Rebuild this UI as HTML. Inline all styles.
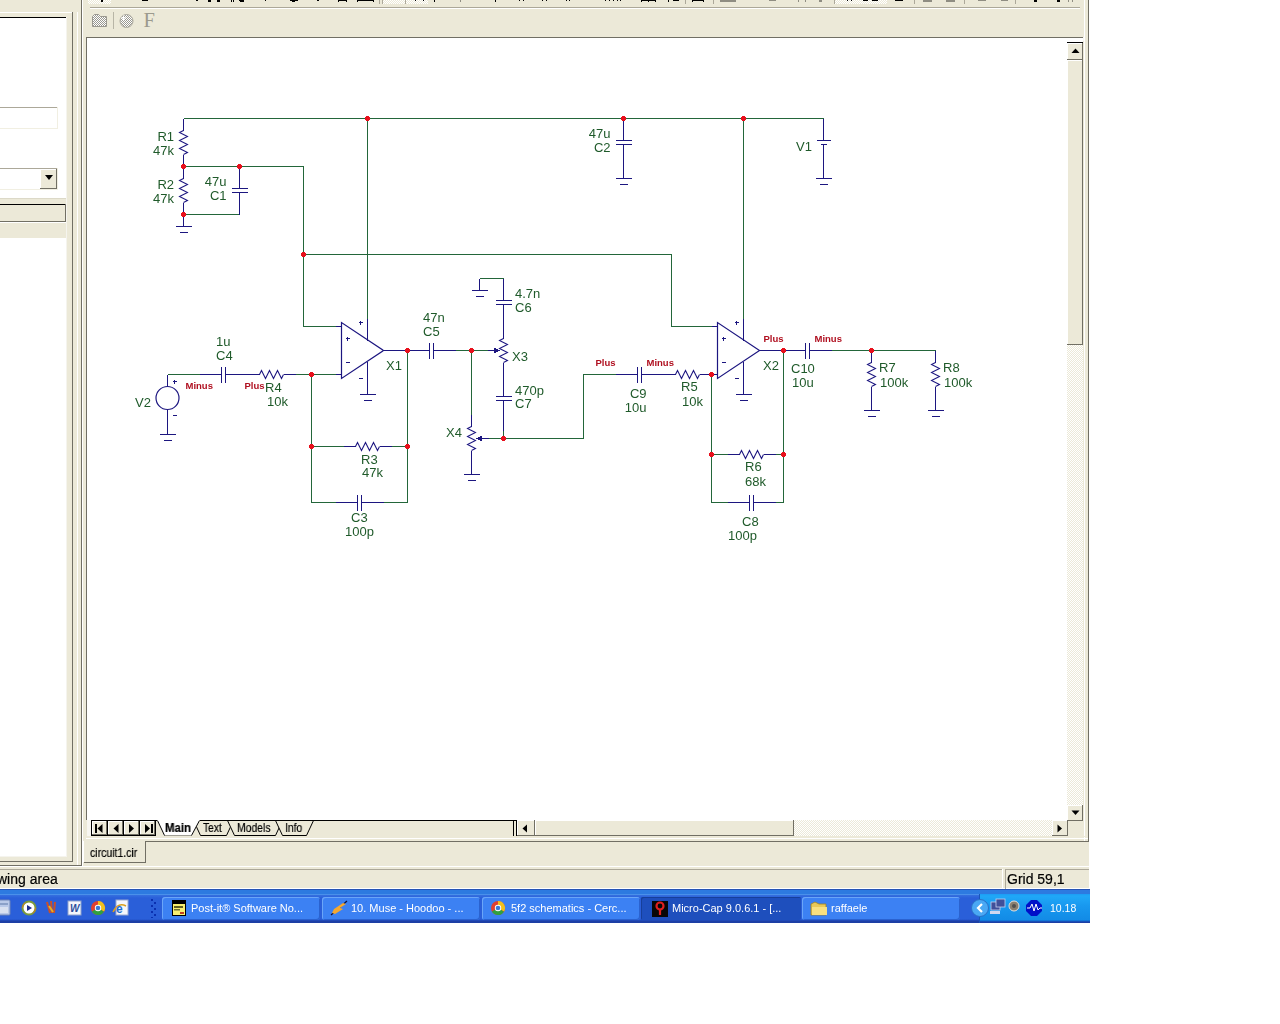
<!DOCTYPE html>
<html><head><meta charset="utf-8">
<style>
html,body{margin:0;padding:0;background:#fff;width:1280px;height:1024px;overflow:hidden;position:relative}
body div, body span, body svg{position:absolute}
span{font-family:"Liberation Sans",sans-serif;white-space:nowrap;line-height:1;will-change:transform;-webkit-text-stroke:0.2px currentColor}
svg text{font-family:"Liberation Sans",sans-serif}
</style></head><body>
<div style="left:0px;top:0px;width:1089px;height:889px;background:#ECE9D8;"></div>
<div style="left:0px;top:12px;width:72px;height:1px;background:#FFFFFF;"></div>
<div style="left:72px;top:12px;width:1px;height:850px;background:#716F64;"></div>
<div style="left:0px;top:861px;width:73px;height:1px;background:#716F64;"></div>
<div style="left:0px;top:17px;width:66px;height:1px;background:#000;"></div>
<div style="left:0px;top:18px;width:66px;height:838px;background:#FFFFFF;"></div>
<div style="left:66px;top:17px;width:1px;height:840px;background:#F5F4EE;"></div>
<div style="left:0px;top:856px;width:67px;height:1px;background:#F5F4EE;"></div>
<div style="left:0px;top:107px;width:57px;height:1px;background:#ACA899;"></div>
<div style="left:0px;top:108px;width:57px;height:20px;background:#FFFFFF;"></div>
<div style="left:57px;top:107px;width:1px;height:22px;background:#F1EFE2;"></div>
<div style="left:0px;top:128px;width:58px;height:1px;background:#F1EFE2;"></div>
<div style="left:0px;top:168px;width:57px;height:1px;background:#ACA899;"></div>
<div style="left:0px;top:169px;width:57px;height:20px;background:#FFFFFF;"></div>
<div style="left:0px;top:189px;width:58px;height:1px;background:#F1EFE2;"></div>
<div style="left:57px;top:168px;width:1px;height:22px;background:#F1EFE2;"></div>
<div style="left:40px;top:169px;width:17px;height:20px;background:#ECE9D8;"></div>
<div style="left:40px;top:169px;width:16px;height:1px;background:#FFFFFF;"></div>
<div style="left:40px;top:169px;width:1px;height:19px;background:#FFFFFF;"></div>
<div style="left:56px;top:169px;width:1px;height:20px;background:#716F64;"></div>
<div style="left:40px;top:188px;width:17px;height:1px;background:#716F64;"></div>
<svg style="position:absolute;left:44px;top:175px" width="10" height="6"><polygon points="1,0 9,0 5,5" fill="#000"/></svg>
<div style="left:0px;top:198px;width:66px;height:1px;background:#DCD9C8;"></div>
<div style="left:0px;top:199px;width:66px;height:5px;background:#ECE9D8;"></div>
<div style="left:0px;top:204px;width:66px;height:1px;background:#000;"></div>
<div style="left:0px;top:205px;width:65px;height:16px;background:#ECE9D8;"></div>
<div style="left:65px;top:204px;width:1px;height:18px;background:#716F64;"></div>
<div style="left:0px;top:221px;width:66px;height:1px;background:#716F64;"></div>
<div style="left:0px;top:222px;width:66px;height:1px;background:#FFFFFF;"></div>
<div style="left:0px;top:223px;width:66px;height:15px;background:#ECE9D8;"></div>
<div style="left:77px;top:12px;width:1px;height:853px;background:#FFFFFF;"></div>
<div style="left:81px;top:0px;width:1px;height:866px;background:#716F64;"></div>
<div style="left:0px;top:865px;width:82px;height:1px;background:#716F64;"></div>
<div style="left:82px;top:0px;width:1px;height:866px;background:#FFFFFF;"></div>
<div style="left:90px;top:7px;width:990px;height:1px;background:#ACA899;"></div>
<div style="left:90px;top:8px;width:990px;height:1px;background:#FFFFFF;"></div>
<div style="left:88px;top:0px;width:23px;height:4px;background:#ECE9D8;background-image:repeating-conic-gradient(#ECE9D8 0 25%,#fff 0 50%);background-size:2px 2px"></div>
<div style="left:382px;top:0px;width:46px;height:4px;background:#ECE9D8;background-image:repeating-conic-gradient(#ECE9D8 0 25%,#fff 0 50%);background-size:2px 2px"></div>
<div style="left:834px;top:0px;width:53px;height:4px;background:#ECE9D8;background-image:repeating-conic-gradient(#ECE9D8 0 25%,#fff 0 50%);background-size:2px 2px"></div>
<div style="left:405px;top:0px;width:1px;height:4px;background:#ACA899;"></div>
<div style="left:382px;top:0px;width:1px;height:4px;background:#ACA899;"></div>
<div style="left:101px;top:0px;width:2px;height:2px;background:#000;"></div>
<div style="left:142px;top:0px;width:6px;height:1px;background:#000;"></div>
<div style="left:196px;top:0px;width:2px;height:1px;background:#000;"></div>
<div style="left:208px;top:0px;width:3px;height:2px;background:#000;"></div>
<div style="left:217px;top:0px;width:3px;height:2px;background:#000;"></div>
<div style="left:231px;top:0px;width:1px;height:2px;background:#000;"></div>
<div style="left:233px;top:0px;width:1px;height:2px;background:#000;"></div>
<div style="left:239px;top:0px;width:1px;height:1px;background:#000;"></div>
<div style="left:240px;top:0px;width:4px;height:2px;background:#000;"></div>
<div style="left:243px;top:0px;width:1px;height:1px;background:#000;"></div>
<div style="left:265px;top:0px;width:1px;height:1px;background:#000;"></div>
<div style="left:290px;top:0px;width:8px;height:1px;background:#000;"></div>
<div style="left:292px;top:0px;width:3px;height:2px;background:#000;"></div>
<div style="left:317px;top:0px;width:2px;height:1px;background:#000;"></div>
<div style="left:338px;top:0px;width:1px;height:2px;background:#000;"></div>
<div style="left:346px;top:0px;width:1px;height:2px;background:#000;"></div>
<div style="left:338px;top:0px;width:9px;height:1px;background:#000;"></div>
<div style="left:357px;top:0px;width:1px;height:2px;background:#000;"></div>
<div style="left:373px;top:0px;width:1px;height:2px;background:#000;"></div>
<div style="left:357px;top:0px;width:17px;height:1px;background:#000;"></div>
<div style="left:415px;top:0px;width:1px;height:1px;background:#000;"></div>
<div style="left:423px;top:0px;width:1px;height:1px;background:#000;"></div>
<div style="left:434px;top:0px;width:1px;height:2px;background:#000;"></div>
<div style="left:495px;top:0px;width:1px;height:2px;background:#000;"></div>
<div style="left:519px;top:0px;width:1px;height:1px;background:#000;"></div>
<div style="left:523px;top:0px;width:1px;height:1px;background:#000;"></div>
<div style="left:542px;top:0px;width:1px;height:1px;background:#000;"></div>
<div style="left:546px;top:0px;width:1px;height:1px;background:#000;"></div>
<div style="left:566px;top:0px;width:1px;height:1px;background:#000;"></div>
<div style="left:569px;top:0px;width:1px;height:1px;background:#000;"></div>
<div style="left:605px;top:0px;width:1px;height:1px;background:#000;"></div>
<div style="left:609px;top:0px;width:1px;height:1px;background:#000;"></div>
<div style="left:613px;top:0px;width:1px;height:1px;background:#000;"></div>
<div style="left:617px;top:0px;width:1px;height:1px;background:#000;"></div>
<div style="left:620px;top:0px;width:1px;height:1px;background:#000;"></div>
<div style="left:641px;top:0px;width:1px;height:2px;background:#000;"></div>
<div style="left:648px;top:0px;width:1px;height:2px;background:#000;"></div>
<div style="left:655px;top:0px;width:1px;height:2px;background:#000;"></div>
<div style="left:641px;top:0px;width:15px;height:1px;background:#000;"></div>
<div style="left:668px;top:0px;width:1px;height:2px;background:#000;"></div>
<div style="left:673px;top:0px;width:6px;height:1px;background:#000;"></div>
<div style="left:692px;top:0px;width:1px;height:2px;background:#000;"></div>
<div style="left:703px;top:0px;width:1px;height:2px;background:#000;"></div>
<div style="left:692px;top:0px;width:12px;height:1px;background:#000;"></div>
<div style="left:847px;top:0px;width:1px;height:1px;background:#000;"></div>
<div style="left:851px;top:0px;width:1px;height:1px;background:#000;"></div>
<div style="left:863px;top:0px;width:5px;height:1px;background:#000;"></div>
<div style="left:872px;top:0px;width:6px;height:1px;background:#000;"></div>
<div style="left:875px;top:0px;width:2px;height:1px;background:#000;"></div>
<div style="left:895px;top:0px;width:2px;height:1px;background:#000;"></div>
<div style="left:901px;top:0px;width:2px;height:1px;background:#000;"></div>
<div style="left:897px;top:0px;width:4px;height:1px;background:#000;"></div>
<div style="left:1034px;top:0px;width:3px;height:2px;background:#000;"></div>
<div style="left:1057px;top:0px;width:3px;height:2px;background:#000;"></div>
<div style="left:460px;top:0px;width:1px;height:2px;background:#8f8d82;"></div>
<div style="left:720px;top:0px;width:16px;height:2px;background:#8f8d82;"></div>
<div style="left:769px;top:0px;width:7px;height:1px;background:#8f8d82;"></div>
<div style="left:798px;top:0px;width:1px;height:2px;background:#8f8d82;"></div>
<div style="left:805px;top:0px;width:1px;height:2px;background:#8f8d82;"></div>
<div style="left:819px;top:0px;width:3px;height:2px;background:#8f8d82;"></div>
<div style="left:923px;top:0px;width:9px;height:2px;background:#8f8d82;"></div>
<div style="left:946px;top:0px;width:9px;height:2px;background:#8f8d82;"></div>
<div style="left:978px;top:0px;width:8px;height:1px;background:#8f8d82;"></div>
<div style="left:1001px;top:0px;width:7px;height:1px;background:#8f8d82;"></div>
<div style="left:1068px;top:0px;width:1px;height:2px;background:#8f8d82;"></div>
<div style="left:1072px;top:0px;width:1px;height:2px;background:#8f8d82;"></div>
<div style="left:379px;top:0px;width:1px;height:4px;background:#ACA899;"></div>
<div style="left:685px;top:0px;width:1px;height:4px;background:#ACA899;"></div>
<div style="left:713px;top:0px;width:1px;height:4px;background:#ACA899;"></div>
<div style="left:834px;top:0px;width:1px;height:4px;background:#ACA899;"></div>
<div style="left:914px;top:0px;width:1px;height:4px;background:#ACA899;"></div>
<div style="left:964px;top:0px;width:1px;height:4px;background:#ACA899;"></div>
<div style="left:1015px;top:0px;width:1px;height:4px;background:#ACA899;"></div>
<svg style="position:absolute;left:90px;top:12px" width="70" height="18">
<defs><pattern id="dith" width="2" height="2" patternUnits="userSpaceOnUse"><rect width="2" height="2" fill="#ffffff"/><rect width="1" height="1" fill="#9a9890"/><rect x="1" y="1" width="1" height="1" fill="#9a9890"/></pattern></defs>
<path d="M2.5,4.5 L4.5,2.5 L8.5,2.5 L10.5,4.5 L16.5,4.5 L16.5,14.5 L2.5,14.5 Z" fill="url(#dith)" stroke="#9a9890" stroke-width="1"/>
<rect x="23" y="-1" width="1" height="18" fill="#b8b5a6"/>
<circle cx="36.5" cy="9" r="6.5" fill="url(#dith)" stroke="#a9a79c"/>
<path d="M31,6 L36,6 M33.5,3.5 L33.5,9" stroke="#fff" stroke-width="1"/>
<text x="53.5" y="15" style="font-family:'Liberation Serif';font-size:20.5px;font-weight:normal" fill="#9c9a8e">F</text>
</svg>
<div style="left:86px;top:37px;width:997px;height:1px;background:#716F64;"></div>
<div style="left:86px;top:37px;width:1px;height:783px;background:#716F64;"></div>
<div style="left:87px;top:38px;width:980px;height:782px;background:#FFFFFF;"></div>
<div style="left:1088px;top:0px;width:1px;height:842px;background:#716F64;"></div>
<div style="left:1083px;top:37px;width:1px;height:4px;background:#F7F6F1;"></div>
<div style="left:1084px;top:0px;width:1px;height:841px;background:#FFFFFF;"></div>
<div style="left:87px;top:820px;width:4px;height:16px;background:#F7F6F1;"></div>
<div style="left:86px;top:836px;width:1002px;height:1px;background:#ECE9D8;"></div>
<div style="left:86px;top:838px;width:1002px;height:1px;background:#FFFFFF;"></div>
<div style="left:146px;top:841px;width:943px;height:1px;background:#716F64;"></div>
<div style="left:1067px;top:38px;width:16px;height:4px;background:#FFFFFF;"></div>
<div style="left:1067px;top:42px;width:16px;height:1px;background:#000;"></div>
<div style="left:1067px;top:43px;width:16px;height:17px;background:#ECE9D8;"></div>
<div style="left:1067px;top:43px;width:15px;height:1px;background:#FFFFFF;"></div>
<div style="left:1067px;top:43px;width:1px;height:16px;background:#FFFFFF;"></div>
<div style="left:1082px;top:43px;width:1px;height:17px;background:#716F64;"></div>
<div style="left:1067px;top:59px;width:16px;height:1px;background:#716F64;"></div>
<svg style="position:absolute;left:1071px;top:48px" width="9" height="6"><polygon points="4.5,0.5 8.5,5 0.5,5" fill="#000"/></svg>
<div style="left:1067px;top:60px;width:16px;height:285px;background:#ECE9D8;"></div>
<div style="left:1067px;top:60px;width:15px;height:1px;background:#FFFFFF;"></div>
<div style="left:1067px;top:60px;width:1px;height:284px;background:#FFFFFF;"></div>
<div style="left:1082px;top:60px;width:1px;height:285px;background:#716F64;"></div>
<div style="left:1067px;top:344px;width:16px;height:1px;background:#716F64;"></div>
<div style="left:1067px;top:345px;width:16px;height:460px;background:#ECE9D8;background-image:repeating-conic-gradient(#ECE9D8 0 25%,#fff 0 50%);background-size:2px 2px"></div>
<div style="left:1067px;top:805px;width:16px;height:16px;background:#ECE9D8;"></div>
<div style="left:1067px;top:805px;width:15px;height:1px;background:#FFFFFF;"></div>
<div style="left:1067px;top:805px;width:1px;height:15px;background:#FFFFFF;"></div>
<div style="left:1082px;top:805px;width:1px;height:16px;background:#716F64;"></div>
<div style="left:1067px;top:820px;width:16px;height:1px;background:#716F64;"></div>
<svg style="position:absolute;left:1071px;top:810px" width="9" height="6"><polygon points="0.5,0.5 8.5,0.5 4.5,5" fill="#000"/></svg>
<div style="left:91px;top:820px;width:66px;height:1px;background:#000;"></div>
<div style="left:300px;top:820px;width:217px;height:1px;background:#000;"></div>
<div style="left:91px;top:835px;width:65px;height:1px;background:#000;"></div>
<div style="left:91px;top:821px;width:426px;height:14px;background:#ECE9D8;"></div>
<div style="left:91px;top:820px;width:1px;height:16px;background:#000;"></div>
<div style="left:92px;top:821px;width:15px;height:14px;background:#ECE9D8;"></div>
<div style="left:92px;top:821px;width:14px;height:1px;background:#FFFFFF;"></div>
<div style="left:92px;top:821px;width:1px;height:13px;background:#FFFFFF;"></div>
<div style="left:106px;top:821px;width:1px;height:14px;background:#716F64;"></div>
<div style="left:92px;top:834px;width:15px;height:1px;background:#716F64;"></div>
<div style="left:107px;top:820px;width:1px;height:16px;background:#000;"></div>
<div style="left:108px;top:821px;width:15px;height:14px;background:#ECE9D8;"></div>
<div style="left:108px;top:821px;width:14px;height:1px;background:#FFFFFF;"></div>
<div style="left:108px;top:821px;width:1px;height:13px;background:#FFFFFF;"></div>
<div style="left:122px;top:821px;width:1px;height:14px;background:#716F64;"></div>
<div style="left:108px;top:834px;width:15px;height:1px;background:#716F64;"></div>
<div style="left:123px;top:820px;width:1px;height:16px;background:#000;"></div>
<div style="left:124px;top:821px;width:15px;height:14px;background:#ECE9D8;"></div>
<div style="left:124px;top:821px;width:14px;height:1px;background:#FFFFFF;"></div>
<div style="left:124px;top:821px;width:1px;height:13px;background:#FFFFFF;"></div>
<div style="left:138px;top:821px;width:1px;height:14px;background:#716F64;"></div>
<div style="left:124px;top:834px;width:15px;height:1px;background:#716F64;"></div>
<div style="left:139px;top:820px;width:1px;height:16px;background:#000;"></div>
<div style="left:140px;top:821px;width:15px;height:14px;background:#ECE9D8;"></div>
<div style="left:140px;top:821px;width:14px;height:1px;background:#FFFFFF;"></div>
<div style="left:140px;top:821px;width:1px;height:13px;background:#FFFFFF;"></div>
<div style="left:154px;top:821px;width:1px;height:14px;background:#716F64;"></div>
<div style="left:140px;top:834px;width:15px;height:1px;background:#716F64;"></div>
<div style="left:155px;top:820px;width:1px;height:16px;background:#000;"></div>
<svg style="position:absolute;left:91px;top:820px" width="65" height="16">
<rect x="4" y="4" width="2" height="9" fill="#000"/><polygon points="11.5,4 11.5,13 6.5,8.5" fill="#000"/>
<polygon points="27.5,4 27.5,13 22.5,8.5" fill="#000"/>
<polygon points="38,4 38,13 43,8.5" fill="#000"/>
<polygon points="54,4 54,13 59,8.5" fill="#000"/><rect x="60" y="4" width="2" height="9" fill="#000"/>
</svg>
<svg style="position:absolute;left:155px;top:820px" width="165" height="16" shape-rendering="geometricPrecision">
<polygon points="38,0 79,0 72,15.5 45,15.5" fill="#ECE9D8"/><path d="M38.5,0.5 L45.5,15.5 L71.5,15.5 L78.5,0.5" stroke="#000" fill="none"/>
<polygon points="72,0 127.5,0 120.5,15.5 79,15.5" fill="#ECE9D8"/><path d="M72.5,0.5 L79.5,15.5 L120.5,15.5 L127.5,0.5" stroke="#000" fill="none"/>
<polygon points="120.5,0 158.5,0 151.5,15.5 127.5,15.5" fill="#ECE9D8"/><path d="M120.5,0.5 L127.5,15.5 L151.5,15.5 L158.5,0.5" stroke="#000" fill="none"/>
<polygon points="2,0 45,0 37,15.5 9,15.5" fill="#ffffff"/>
<path d="M9.5,15.5 L36.5,15.5" stroke="#a09e94" fill="none"/>
<path d="M2.5,0.5 L9.5,15.5 M36.5,15.5 L44.5,0.5" stroke="#000" fill="none"/>
<rect x="45" y="0" width="120" height="1" fill="#000"/>
</svg>
<span style="left:165px;top:822px;font-size:12px;color:#000;font-weight:bold;transform:scaleX(0.95);transform-origin:0 0">Main</span>
<span style="left:203px;top:822px;font-size:12px;color:#000;transform:scaleX(0.85);transform-origin:0 0">Text</span>
<span style="left:237px;top:822px;font-size:12px;color:#000;transform:scaleX(0.866);transform-origin:0 0">Models</span>
<span style="left:285px;top:822px;font-size:12px;color:#000;transform:scaleX(0.86);transform-origin:0 0">Info</span>
<div style="left:513px;top:820px;width:1px;height:16px;background:#000;"></div>
<div style="left:516px;top:820px;width:1px;height:16px;background:#000;"></div>
<div style="left:514px;top:821px;width:2px;height:14px;background:#ECE9D8;"></div>
<div style="left:517px;top:820px;width:18px;height:16px;background:#ECE9D8;"></div>
<div style="left:517px;top:820px;width:17px;height:1px;background:#FFFFFF;"></div>
<div style="left:517px;top:820px;width:1px;height:15px;background:#FFFFFF;"></div>
<div style="left:534px;top:820px;width:1px;height:16px;background:#716F64;"></div>
<div style="left:517px;top:835px;width:18px;height:1px;background:#716F64;"></div>
<svg style="position:absolute;left:522px;top:824px" width="6" height="9"><polygon points="5,0.5 5,8.5 0.5,4.5" fill="#000"/></svg>
<div style="left:535px;top:820px;width:259px;height:16px;background:#ECE9D8;"></div>
<div style="left:535px;top:820px;width:258px;height:1px;background:#FFFFFF;"></div>
<div style="left:535px;top:820px;width:1px;height:15px;background:#FFFFFF;"></div>
<div style="left:793px;top:820px;width:1px;height:16px;background:#716F64;"></div>
<div style="left:535px;top:835px;width:259px;height:1px;background:#716F64;"></div>
<div style="left:794px;top:820px;width:258px;height:16px;background:#ECE9D8;background-image:repeating-conic-gradient(#ECE9D8 0 25%,#fff 0 50%);background-size:2px 2px"></div>
<div style="left:1052px;top:820px;width:16px;height:16px;background:#ECE9D8;"></div>
<div style="left:1052px;top:820px;width:15px;height:1px;background:#FFFFFF;"></div>
<div style="left:1052px;top:820px;width:1px;height:15px;background:#FFFFFF;"></div>
<div style="left:1067px;top:820px;width:1px;height:16px;background:#716F64;"></div>
<div style="left:1052px;top:835px;width:16px;height:1px;background:#716F64;"></div>
<svg style="position:absolute;left:1057px;top:824px" width="6" height="9"><polygon points="0.5,0.5 0.5,8.5 5,4.5" fill="#000"/></svg>
<div style="left:1068px;top:821px;width:15px;height:15px;background:#ECE9D8;"></div>
<div style="left:84px;top:841px;width:62px;height:21px;background:#ECE9D8;"></div>
<div style="left:145px;top:841px;width:1px;height:22px;background:#716F64;"></div>
<div style="left:84px;top:862px;width:62px;height:1px;background:#716F64;"></div>
<div style="left:83px;top:841px;width:1px;height:21px;background:#FFFFFF;"></div>
<span style="left:90px;top:847px;font-size:12px;color:#000;transform:scaleX(0.876);transform-origin:0 0">circuit1.cir</span>
<div style="left:0px;top:866px;width:1089px;height:1px;background:#FFFFFF;"></div>
<div style="left:0px;top:869px;width:1002px;height:1px;background:#ACA899;"></div>
<div style="left:1002px;top:869px;width:1px;height:20px;background:#FFFFFF;"></div>
<div style="left:0px;top:888px;width:1089px;height:1px;background:#FFFFFF;"></div>
<div style="left:1005px;top:869px;width:84px;height:1px;background:#ACA899;"></div>
<div style="left:1005px;top:869px;width:1px;height:20px;background:#ACA899;"></div>
<span style="left:-3px;top:872px;font-size:14px;color:#000;">wing area</span>
<span style="left:1007px;top:872px;font-size:14px;color:#000;">Grid 59,1</span>
<svg style="position:absolute;left:0;top:0;will-change:transform" width="1090" height="890" shape-rendering="crispEdges">
<g stroke-width="1">
<polyline points="183.5,118.5 823.5,118.5" stroke="#23663a" fill="none"/>
<polyline points="183.5,166.5 303.5,166.5 303.5,326.5 335.5,326.5" stroke="#23663a" fill="none"/>
<polyline points="183.5,214.5 239.5,214.5" stroke="#23663a" fill="none"/>
<polyline points="367.5,118.5 367.5,318.5" stroke="#23663a" fill="none"/>
<polyline points="303.5,254.5 671.5,254.5 671.5,326.5 711.5,326.5" stroke="#23663a" fill="none"/>
<polyline points="743.5,118.5 743.5,318.5" stroke="#23663a" fill="none"/>
<polyline points="167.5,374.5 199.5,374.5" stroke="#23663a" fill="none"/>
<polyline points="295.5,374.5 335.5,374.5" stroke="#23663a" fill="none"/>
<polyline points="311.5,374.5 311.5,502.5 335.5,502.5" stroke="#23663a" fill="none"/>
<polyline points="311.5,446.5 343.5,446.5" stroke="#23663a" fill="none"/>
<polyline points="391.5,446.5 407.5,446.5" stroke="#23663a" fill="none"/>
<polyline points="383.5,502.5 407.5,502.5 407.5,350.5" stroke="#23663a" fill="none"/>
<polyline points="455.5,350.5 487.5,350.5" stroke="#23663a" fill="none"/>
<polyline points="471.5,350.5 471.5,414.5" stroke="#23663a" fill="none"/>
<polyline points="479.5,278.5 503.5,278.5" stroke="#23663a" fill="none"/>
<polyline points="503.5,430.5 503.5,438.5 583.5,438.5 583.5,374.5 615.5,374.5" stroke="#23663a" fill="none"/>
<polyline points="488.5,438.5 503.5,438.5" stroke="#23663a" fill="none"/>
<polyline points="711.5,374.5 711.5,502.5 727.5,502.5" stroke="#23663a" fill="none"/>
<polyline points="711.5,454.5 727.5,454.5" stroke="#23663a" fill="none"/>
<polyline points="775.5,454.5 783.5,454.5" stroke="#23663a" fill="none"/>
<polyline points="775.5,502.5 783.5,502.5 783.5,350.5" stroke="#23663a" fill="none"/>
<polyline points="831.5,350.5 935.5,350.5" stroke="#23663a" fill="none"/>
<line x1="183.5" y1="118.5" x2="183.5" y2="130.5" stroke="#1c1680"/>
<line x1="183.5" y1="154.5" x2="183.5" y2="166.5" stroke="#1c1680"/>
<polyline points="183.5,130.5 179.5,132.5 187.5,136.5 179.5,140.5 187.5,144.5 179.5,148.5 187.5,152.5 183.5,154.5" stroke="#1c1680" fill="none" shape-rendering="geometricPrecision" stroke-width="1.05"/>
<line x1="183.5" y1="166.5" x2="183.5" y2="178.5" stroke="#1c1680"/>
<line x1="183.5" y1="202.5" x2="183.5" y2="214.5" stroke="#1c1680"/>
<polyline points="183.5,178.5 179.5,180.5 187.5,184.5 179.5,188.5 187.5,192.5 179.5,196.5 187.5,200.5 183.5,202.5" stroke="#1c1680" fill="none" shape-rendering="geometricPrecision" stroke-width="1.05"/>
<line x1="183.5" y1="214.5" x2="183.5" y2="226.5" stroke="#1c1680"/>
<line x1="175.5" y1="226.5" x2="191.5" y2="226.5" stroke="#1c1680"/>
<line x1="179.5" y1="232.5" x2="187.5" y2="232.5" stroke="#1c1680"/>
<line x1="239.5" y1="166.5" x2="239.5" y2="188.5" stroke="#1c1680"/>
<line x1="239.5" y1="192.5" x2="239.5" y2="214.5" stroke="#1c1680"/>
<line x1="231.5" y1="188.5" x2="247.5" y2="188.5" stroke="#1c1680"/>
<line x1="231.5" y1="192.5" x2="247.5" y2="192.5" stroke="#1c1680"/>
<line x1="623.5" y1="118.5" x2="623.5" y2="140.5" stroke="#1c1680"/>
<line x1="623.5" y1="144.5" x2="623.5" y2="166.5" stroke="#1c1680"/>
<line x1="615.5" y1="140.5" x2="631.5" y2="140.5" stroke="#1c1680"/>
<line x1="615.5" y1="144.5" x2="631.5" y2="144.5" stroke="#1c1680"/>
<line x1="623.5" y1="166.5" x2="623.5" y2="178.5" stroke="#1c1680"/>
<line x1="615.5" y1="178.5" x2="631.5" y2="178.5" stroke="#1c1680"/>
<line x1="619.5" y1="184.5" x2="627.5" y2="184.5" stroke="#1c1680"/>
<line x1="823.5" y1="118.5" x2="823.5" y2="140.5" stroke="#1c1680"/>
<line x1="816.5" y1="140.5" x2="830.5" y2="140.5" stroke="#1c1680"/>
<line x1="820.5" y1="144.5" x2="826.5" y2="144.5" stroke="#1c1680"/>
<line x1="823.5" y1="144.5" x2="823.5" y2="178.5" stroke="#1c1680"/>
<line x1="815.5" y1="178.5" x2="831.5" y2="178.5" stroke="#1c1680"/>
<line x1="819.5" y1="184.5" x2="827.5" y2="184.5" stroke="#1c1680"/>
<polygon points="341.5,322.5 341.5,378.5 383.5,350.5" stroke="#1c1680" fill="none" shape-rendering="geometricPrecision" stroke-width="1.2"/>
<line x1="335.5" y1="326.5" x2="341.5" y2="326.5" stroke="#1c1680"/>
<line x1="335.5" y1="374.5" x2="341.5" y2="374.5" stroke="#1c1680"/>
<line x1="383.5" y1="350.5" x2="407.5" y2="350.5" stroke="#1c1680"/>
<line x1="367.5" y1="318.5" x2="367.5" y2="340.5" stroke="#1c1680"/>
<line x1="367.5" y1="361.5" x2="367.5" y2="382.5" stroke="#1c1680"/>
<line x1="345.5" y1="338.5" x2="349.5" y2="338.5" stroke="#1c1680"/>
<line x1="347.5" y1="336.5" x2="347.5" y2="340.5" stroke="#1c1680"/>
<line x1="345.5" y1="362.5" x2="349.5" y2="362.5" stroke="#1c1680"/>
<line x1="358.5" y1="322.5" x2="362.5" y2="322.5" stroke="#1c1680"/>
<line x1="360.5" y1="320.5" x2="360.5" y2="324.5" stroke="#1c1680"/>
<line x1="358.5" y1="378.5" x2="362.5" y2="378.5" stroke="#1c1680"/>
<polygon points="717.5,322.5 717.5,378.5 759.5,350.5" stroke="#1c1680" fill="none" shape-rendering="geometricPrecision" stroke-width="1.2"/>
<line x1="711.5" y1="326.5" x2="717.5" y2="326.5" stroke="#1c1680"/>
<line x1="711.5" y1="374.5" x2="717.5" y2="374.5" stroke="#1c1680"/>
<line x1="759.5" y1="350.5" x2="783.5" y2="350.5" stroke="#1c1680"/>
<line x1="743.5" y1="318.5" x2="743.5" y2="340.5" stroke="#1c1680"/>
<line x1="743.5" y1="361.5" x2="743.5" y2="382.5" stroke="#1c1680"/>
<line x1="721.5" y1="338.5" x2="725.5" y2="338.5" stroke="#1c1680"/>
<line x1="723.5" y1="336.5" x2="723.5" y2="340.5" stroke="#1c1680"/>
<line x1="721.5" y1="362.5" x2="725.5" y2="362.5" stroke="#1c1680"/>
<line x1="734.5" y1="322.5" x2="738.5" y2="322.5" stroke="#1c1680"/>
<line x1="736.5" y1="320.5" x2="736.5" y2="324.5" stroke="#1c1680"/>
<line x1="734.5" y1="378.5" x2="738.5" y2="378.5" stroke="#1c1680"/>
<line x1="367.5" y1="382.5" x2="367.5" y2="394.5" stroke="#1c1680"/>
<line x1="359.5" y1="394.5" x2="375.5" y2="394.5" stroke="#1c1680"/>
<line x1="363.5" y1="400.5" x2="371.5" y2="400.5" stroke="#1c1680"/>
<line x1="743.5" y1="382.5" x2="743.5" y2="394.5" stroke="#1c1680"/>
<line x1="735.5" y1="394.5" x2="751.5" y2="394.5" stroke="#1c1680"/>
<line x1="739.5" y1="400.5" x2="747.5" y2="400.5" stroke="#1c1680"/>
<circle cx="167.5" cy="398" r="11.5" stroke="#1c1680" fill="none" shape-rendering="geometricPrecision" stroke-width="1.2"/>
<line x1="167.5" y1="374.5" x2="167.5" y2="386.5" stroke="#1c1680"/>
<line x1="167.5" y1="409.5" x2="167.5" y2="434.5" stroke="#1c1680"/>
<line x1="159.5" y1="434.5" x2="175.5" y2="434.5" stroke="#1c1680"/>
<line x1="163.5" y1="440.5" x2="171.5" y2="440.5" stroke="#1c1680"/>
<line x1="172.5" y1="381.5" x2="176.5" y2="381.5" stroke="#1c1680"/>
<line x1="174.5" y1="379.5" x2="174.5" y2="383.5" stroke="#1c1680"/>
<line x1="172.5" y1="415.5" x2="176.5" y2="415.5" stroke="#1c1680"/>
<line x1="199.5" y1="374.5" x2="221.5" y2="374.5" stroke="#1c1680"/>
<line x1="225.5" y1="374.5" x2="247.5" y2="374.5" stroke="#1c1680"/>
<line x1="221.5" y1="366.5" x2="221.5" y2="382.5" stroke="#1c1680"/>
<line x1="225.5" y1="366.5" x2="225.5" y2="382.5" stroke="#1c1680"/>
<line x1="247.5" y1="374.5" x2="259.5" y2="374.5" stroke="#1c1680"/>
<line x1="283.5" y1="374.5" x2="295.5" y2="374.5" stroke="#1c1680"/>
<polyline points="259.5,374.5 261.5,370.5 265.5,378.5 269.5,370.5 273.5,378.5 277.5,370.5 281.5,378.5 283.5,374.5" stroke="#1c1680" fill="none" shape-rendering="geometricPrecision" stroke-width="1.05"/>
<line x1="343.5" y1="446.5" x2="355.5" y2="446.5" stroke="#1c1680"/>
<line x1="379.5" y1="446.5" x2="391.5" y2="446.5" stroke="#1c1680"/>
<polyline points="355.5,446.5 357.5,442.5 361.5,450.5 365.5,442.5 369.5,450.5 373.5,442.5 377.5,450.5 379.5,446.5" stroke="#1c1680" fill="none" shape-rendering="geometricPrecision" stroke-width="1.05"/>
<line x1="335.5" y1="502.5" x2="357.5" y2="502.5" stroke="#1c1680"/>
<line x1="361.5" y1="502.5" x2="383.5" y2="502.5" stroke="#1c1680"/>
<line x1="357.5" y1="494.5" x2="357.5" y2="510.5" stroke="#1c1680"/>
<line x1="361.5" y1="494.5" x2="361.5" y2="510.5" stroke="#1c1680"/>
<line x1="407.5" y1="350.5" x2="429.5" y2="350.5" stroke="#1c1680"/>
<line x1="433.5" y1="350.5" x2="455.5" y2="350.5" stroke="#1c1680"/>
<line x1="429.5" y1="342.5" x2="429.5" y2="358.5" stroke="#1c1680"/>
<line x1="433.5" y1="342.5" x2="433.5" y2="358.5" stroke="#1c1680"/>
<line x1="503.5" y1="278.5" x2="503.5" y2="300.5" stroke="#1c1680"/>
<line x1="503.5" y1="304.5" x2="503.5" y2="326.5" stroke="#1c1680"/>
<line x1="495.5" y1="300.5" x2="511.5" y2="300.5" stroke="#1c1680"/>
<line x1="495.5" y1="304.5" x2="511.5" y2="304.5" stroke="#1c1680"/>
<line x1="503.5" y1="326.5" x2="503.5" y2="338.5" stroke="#1c1680"/>
<line x1="503.5" y1="362.5" x2="503.5" y2="374.5" stroke="#1c1680"/>
<polyline points="503.5,338.5 499.5,340.5 507.5,344.5 499.5,348.5 507.5,352.5 499.5,356.5 507.5,360.5 503.5,362.5" stroke="#1c1680" fill="none" shape-rendering="geometricPrecision" stroke-width="1.05"/>
<line x1="503.5" y1="374.5" x2="503.5" y2="396.5" stroke="#1c1680"/>
<line x1="503.5" y1="400.5" x2="503.5" y2="422.5" stroke="#1c1680"/>
<line x1="495.5" y1="396.5" x2="511.5" y2="396.5" stroke="#1c1680"/>
<line x1="495.5" y1="400.5" x2="511.5" y2="400.5" stroke="#1c1680"/>
<line x1="487.5" y1="350.5" x2="494.5" y2="350.5" stroke="#1c1680"/>
<polygon points="499.5,350.5 493.5,347.5 493.5,353.5" fill="#1c1680"/>
<line x1="479.5" y1="278.5" x2="479.5" y2="290.5" stroke="#1c1680"/>
<line x1="471.5" y1="290.5" x2="487.5" y2="290.5" stroke="#1c1680"/>
<line x1="475.5" y1="296.5" x2="483.5" y2="296.5" stroke="#1c1680"/>
<line x1="471.5" y1="414.5" x2="471.5" y2="426.5" stroke="#1c1680"/>
<line x1="471.5" y1="450.5" x2="471.5" y2="462.5" stroke="#1c1680"/>
<polyline points="471.5,426.5 467.5,428.5 475.5,432.5 467.5,436.5 475.5,440.5 467.5,444.5 475.5,448.5 471.5,450.5" stroke="#1c1680" fill="none" shape-rendering="geometricPrecision" stroke-width="1.05"/>
<line x1="471.5" y1="462.5" x2="471.5" y2="474.5" stroke="#1c1680"/>
<line x1="463.5" y1="474.5" x2="479.5" y2="474.5" stroke="#1c1680"/>
<line x1="467.5" y1="480.5" x2="475.5" y2="480.5" stroke="#1c1680"/>
<line x1="480.5" y1="438.5" x2="488.5" y2="438.5" stroke="#1c1680"/>
<line x1="503.5" y1="422.5" x2="503.5" y2="430.5" stroke="#1c1680"/>
<polygon points="475.5,438.5 481.5,435.5 481.5,441.5" fill="#1c1680"/>
<line x1="615.5" y1="374.5" x2="637.5" y2="374.5" stroke="#1c1680"/>
<line x1="641.5" y1="374.5" x2="663.5" y2="374.5" stroke="#1c1680"/>
<line x1="637.5" y1="366.5" x2="637.5" y2="382.5" stroke="#1c1680"/>
<line x1="641.5" y1="366.5" x2="641.5" y2="382.5" stroke="#1c1680"/>
<line x1="663.5" y1="374.5" x2="675.5" y2="374.5" stroke="#1c1680"/>
<line x1="699.5" y1="374.5" x2="711.5" y2="374.5" stroke="#1c1680"/>
<polyline points="675.5,374.5 677.5,370.5 681.5,378.5 685.5,370.5 689.5,378.5 693.5,370.5 697.5,378.5 699.5,374.5" stroke="#1c1680" fill="none" shape-rendering="geometricPrecision" stroke-width="1.05"/>
<line x1="727.5" y1="454.5" x2="739.5" y2="454.5" stroke="#1c1680"/>
<line x1="763.5" y1="454.5" x2="775.5" y2="454.5" stroke="#1c1680"/>
<polyline points="739.5,454.5 741.5,450.5 745.5,458.5 749.5,450.5 753.5,458.5 757.5,450.5 761.5,458.5 763.5,454.5" stroke="#1c1680" fill="none" shape-rendering="geometricPrecision" stroke-width="1.05"/>
<line x1="727.5" y1="502.5" x2="749.5" y2="502.5" stroke="#1c1680"/>
<line x1="753.5" y1="502.5" x2="775.5" y2="502.5" stroke="#1c1680"/>
<line x1="749.5" y1="494.5" x2="749.5" y2="510.5" stroke="#1c1680"/>
<line x1="753.5" y1="494.5" x2="753.5" y2="510.5" stroke="#1c1680"/>
<line x1="783.5" y1="350.5" x2="805.5" y2="350.5" stroke="#1c1680"/>
<line x1="809.5" y1="350.5" x2="831.5" y2="350.5" stroke="#1c1680"/>
<line x1="805.5" y1="342.5" x2="805.5" y2="358.5" stroke="#1c1680"/>
<line x1="809.5" y1="342.5" x2="809.5" y2="358.5" stroke="#1c1680"/>
<line x1="871.5" y1="350.5" x2="871.5" y2="362.5" stroke="#1c1680"/>
<line x1="871.5" y1="386.5" x2="871.5" y2="398.5" stroke="#1c1680"/>
<polyline points="871.5,362.5 867.5,364.5 875.5,368.5 867.5,372.5 875.5,376.5 867.5,380.5 875.5,384.5 871.5,386.5" stroke="#1c1680" fill="none" shape-rendering="geometricPrecision" stroke-width="1.05"/>
<line x1="871.5" y1="398.5" x2="871.5" y2="410.5" stroke="#1c1680"/>
<line x1="863.5" y1="410.5" x2="879.5" y2="410.5" stroke="#1c1680"/>
<line x1="867.5" y1="416.5" x2="875.5" y2="416.5" stroke="#1c1680"/>
<line x1="935.5" y1="350.5" x2="935.5" y2="362.5" stroke="#1c1680"/>
<line x1="935.5" y1="386.5" x2="935.5" y2="398.5" stroke="#1c1680"/>
<polyline points="935.5,362.5 931.5,364.5 939.5,368.5 931.5,372.5 939.5,376.5 931.5,380.5 939.5,384.5 935.5,386.5" stroke="#1c1680" fill="none" shape-rendering="geometricPrecision" stroke-width="1.05"/>
<line x1="935.5" y1="398.5" x2="935.5" y2="410.5" stroke="#1c1680"/>
<line x1="927.5" y1="410.5" x2="943.5" y2="410.5" stroke="#1c1680"/>
<line x1="931.5" y1="416.5" x2="939.5" y2="416.5" stroke="#1c1680"/>
<circle cx="183.5" cy="166.5" r="2.6" fill="#e8101c"/>
<circle cx="183.5" cy="214.5" r="2.6" fill="#e8101c"/>
<circle cx="239.5" cy="166.5" r="2.6" fill="#e8101c"/>
<circle cx="367.5" cy="118.5" r="2.6" fill="#e8101c"/>
<circle cx="623.5" cy="118.5" r="2.6" fill="#e8101c"/>
<circle cx="743.5" cy="118.5" r="2.6" fill="#e8101c"/>
<circle cx="303.5" cy="254.5" r="2.6" fill="#e8101c"/>
<circle cx="311.5" cy="374.5" r="2.6" fill="#e8101c"/>
<circle cx="407.5" cy="350.5" r="2.6" fill="#e8101c"/>
<circle cx="471.5" cy="350.5" r="2.6" fill="#e8101c"/>
<circle cx="503.5" cy="438.5" r="2.6" fill="#e8101c"/>
<circle cx="711.5" cy="374.5" r="2.6" fill="#e8101c"/>
<circle cx="783.5" cy="350.5" r="2.6" fill="#e8101c"/>
<circle cx="871.5" cy="350.5" r="2.6" fill="#e8101c"/>
<circle cx="311.5" cy="446.5" r="2.6" fill="#e8101c"/>
<circle cx="407.5" cy="446.5" r="2.6" fill="#e8101c"/>
<circle cx="711.5" cy="454.5" r="2.6" fill="#e8101c"/>
<circle cx="783.5" cy="454.5" r="2.6" fill="#e8101c"/>
<text x="174" y="141" fill="#1f5a2a" font-size="13" text-anchor="end">R1</text>
<text x="174" y="155" fill="#1f5a2a" font-size="13" text-anchor="end">47k</text>
<text x="174" y="189" fill="#1f5a2a" font-size="13" text-anchor="end">R2</text>
<text x="174" y="202.5" fill="#1f5a2a" font-size="13" text-anchor="end">47k</text>
<text x="226.5" y="186" fill="#1f5a2a" font-size="13" text-anchor="end">47u</text>
<text x="226.5" y="200" fill="#1f5a2a" font-size="13" text-anchor="end">C1</text>
<text x="610.5" y="137.6" fill="#1f5a2a" font-size="13" text-anchor="end">47u</text>
<text x="610.5" y="151.6" fill="#1f5a2a" font-size="13" text-anchor="end">C2</text>
<text x="812" y="151" fill="#1f5a2a" font-size="13" text-anchor="end">V1</text>
<text x="216" y="346" fill="#1f5a2a" font-size="13" >1u</text>
<text x="216" y="360" fill="#1f5a2a" font-size="13" >C4</text>
<text x="151" y="407" fill="#1f5a2a" font-size="13" text-anchor="end">V2</text>
<text x="265" y="391.7" fill="#1f5a2a" font-size="13" >R4</text>
<text x="267" y="406" fill="#1f5a2a" font-size="13" >10k</text>
<text x="386" y="370" fill="#1f5a2a" font-size="13" >X1</text>
<text x="423" y="321.7" fill="#1f5a2a" font-size="13" >47n</text>
<text x="423" y="335.8" fill="#1f5a2a" font-size="13" >C5</text>
<text x="515" y="298" fill="#1f5a2a" font-size="13" >4.7n</text>
<text x="515" y="312" fill="#1f5a2a" font-size="13" >C6</text>
<text x="512" y="361" fill="#1f5a2a" font-size="13" >X3</text>
<text x="515" y="394.6" fill="#1f5a2a" font-size="13" >470p</text>
<text x="515" y="407.5" fill="#1f5a2a" font-size="13" >C7</text>
<text x="462" y="436.6" fill="#1f5a2a" font-size="13" text-anchor="end">X4</text>
<text x="361" y="463.7" fill="#1f5a2a" font-size="13" >R3</text>
<text x="362" y="477.4" fill="#1f5a2a" font-size="13" >47k</text>
<text x="351" y="521.6" fill="#1f5a2a" font-size="13" >C3</text>
<text x="345" y="535.7" fill="#1f5a2a" font-size="13" >100p</text>
<text x="646.5" y="397.6" fill="#1f5a2a" font-size="13" text-anchor="end">C9</text>
<text x="646.5" y="411.7" fill="#1f5a2a" font-size="13" text-anchor="end">10u</text>
<text x="681" y="391" fill="#1f5a2a" font-size="13" >R5</text>
<text x="682" y="405.7" fill="#1f5a2a" font-size="13" >10k</text>
<text x="763" y="369.6" fill="#1f5a2a" font-size="13" >X2</text>
<text x="745" y="471.4" fill="#1f5a2a" font-size="13" >R6</text>
<text x="745" y="485.8" fill="#1f5a2a" font-size="13" >68k</text>
<text x="742" y="525.7" fill="#1f5a2a" font-size="13" >C8</text>
<text x="728" y="539.6" fill="#1f5a2a" font-size="13" >100p</text>
<text x="791" y="373.3" fill="#1f5a2a" font-size="13" >C10</text>
<text x="792" y="387.4" fill="#1f5a2a" font-size="13" >10u</text>
<text x="879" y="372.4" fill="#1f5a2a" font-size="13" >R7</text>
<text x="880" y="387" fill="#1f5a2a" font-size="13" >100k</text>
<text x="943" y="372.4" fill="#1f5a2a" font-size="13" >R8</text>
<text x="944" y="387" fill="#1f5a2a" font-size="13" >100k</text>
<text x="185.5" y="389" fill="#b01020" font-size="9.5" font-weight="bold">Minus</text>
<text x="244.5" y="388.6" fill="#b01020" font-size="9.5" font-weight="bold">Plus</text>
<text x="595.5" y="366.2" fill="#b01020" font-size="9.5" font-weight="bold">Plus</text>
<text x="646.5" y="366" fill="#b01020" font-size="9.5" font-weight="bold">Minus</text>
<text x="763.5" y="342.1" fill="#b01020" font-size="9.5" font-weight="bold">Plus</text>
<text x="814.5" y="342" fill="#b01020" font-size="9.5" font-weight="bold">Minus</text>
</g></svg>
<div style="left:0px;top:889px;width:1090px;height:34px;background:#245EDC;background:linear-gradient(to bottom,#2553b5 0px,#2553b5 1px,#2d7ae0 1px,#2d7ae0 5px,#4a90ea 5px,#4a90ea 6px,#3570e0 6px,#2a5fd9 9px,#2a5fd9 30px,#2352c8 31px,#1d3fa5 32px,#1d3fa5 34px)"></div>
<svg style="position:absolute;left:0px;top:898px" width="160" height="20">
<rect x="-3" y="2" width="13" height="15" rx="1" fill="#b8c8e8" stroke="#6f86b8"/>
<rect x="0" y="5" width="8" height="2" fill="#8aa0c8"/><rect x="0" y="9" width="8" height="6" fill="#d8e0f0"/>
<circle cx="29" cy="10" r="6.5" fill="#fff" stroke="#7a9a3c" stroke-width="2"/><circle cx="29" cy="10" r="6.5" fill="none" stroke="#d07a20" stroke-width="1" stroke-dasharray="6 14"/>
<polygon points="27,7 27,13 32,10" fill="#1b2a8a"/>
<path d="M47,4 L50,15 M51,3 L52,15 M55,4 L54,15" stroke="#c8502a" stroke-width="2"/><path d="M49,8 L53,14" stroke="#e8b020" stroke-width="2"/>
<rect x="68" y="3" width="13" height="14" fill="#f4f6fc" stroke="#8ea2cc"/><text x="70" y="14" font-size="10" font-weight="bold" font-style="italic" fill="#2b4f9c" font-family="Liberation Serif">W</text>
<circle cx="98" cy="10" r="7" fill="#e04030"/><path d="M98,10 L91.9,13.5 A7,7 0 0 0 104,13.6 Z" fill="#30a040"/><path d="M98,10 L104.1,13.5 A7,7 0 0 0 98,3 Z" fill="#f0c020"/><circle cx="98" cy="10" r="3.2" fill="#fff"/><circle cx="98" cy="10" r="2.3" fill="#3a78d8"/>
<rect x="116" y="2" width="12" height="15" fill="#f4f6fc" stroke="#9aaad0"/><path d="M113,14 Q118,4 126,8" stroke="#d8a020" stroke-width="1.5" fill="none"/><text x="116" y="15" font-size="12" font-weight="bold" fill="#1f6fd0">e</text>
<g fill="#0a30b0"><rect x="151" y="1" width="2" height="2"/><rect x="154" y="4" width="2" height="2"/><rect x="151" y="7" width="2" height="2"/><rect x="154" y="10" width="2" height="2"/><rect x="151" y="13" width="2" height="2"/><rect x="154" y="16" width="2" height="2"/><rect x="151" y="19" width="2" height="2"/></g>
</svg>
<div style="left:162px;top:897px;width:158px;height:23px;background:#3c81f3;border-radius:3px;box-shadow:inset 1px 1px 0 #6aa5f8, inset -1px -1px 0 #2a62d0"></div>
<div style="left:322px;top:897px;width:158px;height:23px;background:#3c81f3;border-radius:3px;box-shadow:inset 1px 1px 0 #6aa5f8, inset -1px -1px 0 #2a62d0"></div>
<div style="left:482px;top:897px;width:158px;height:23px;background:#3c81f3;border-radius:3px;box-shadow:inset 1px 1px 0 #6aa5f8, inset -1px -1px 0 #2a62d0"></div>
<div style="left:641px;top:897px;width:160px;height:23px;background:#1e4fbd;border-radius:2px;box-shadow:inset 1px 1px 0 #173f9a"></div>
<div style="left:802px;top:897px;width:158px;height:23px;background:#3c81f3;border-radius:3px;box-shadow:inset 1px 1px 0 #6aa5f8, inset -1px -1px 0 #2a62d0"></div>
<svg style="position:absolute;left:160px;top:896px" width="820" height="24">
<rect x="12.5" y="4.5" width="13" height="15" fill="#f8f070" stroke="#000"/><rect x="13" y="5" width="12" height="3" fill="#000"/><rect x="14" y="10" width="9" height="2" fill="#606020"/><rect x="14" y="13" width="6" height="1.5" fill="#707030"/><rect x="20" y="16" width="4" height="2" fill="#c04020"/>
<path d="M171,19 L187,5" stroke="#10103a" stroke-width="1.2"/><polygon points="174,13 183,7 186,8 180,12 183,13 175,18 172,17" fill="#f4a830"/>
<circle cx="338" cy="12" r="7" fill="#e04030"/><path d="M338,12 L331.9,15.5 A7,7 0 0 0 344,15.6 Z" fill="#30a040"/><path d="M338,12 L344.1,15.5 A7,7 0 0 0 338,5 Z" fill="#f0c020"/><circle cx="338" cy="12" r="3.2" fill="#fff"/><circle cx="338" cy="12" r="2.3" fill="#3a78d8"/>
<rect x="492" y="5" width="16" height="16" fill="#080808"/><circle cx="500" cy="10" r="3.5" fill="none" stroke="#e02020" stroke-width="2.2"/><path d="M500,13 L500,19" stroke="#e02020" stroke-width="2.2"/>
<path d="M651,8 L655,6 L659,8 L666,8 L666,19 L651,19 Z" fill="#e8c858" stroke="#a08020" stroke-width="0.8"/><rect x="652" y="11" width="15" height="8" fill="#f8e080"/>
</svg>
<span style="left:191px;top:903px;font-size:11px;color:#fff;-webkit-text-stroke:0;">Post-it® Software No...</span>
<span style="left:351px;top:903px;font-size:11px;color:#fff;-webkit-text-stroke:0;">10. Muse - Hoodoo - ...</span>
<span style="left:511px;top:903px;font-size:11px;color:#fff;-webkit-text-stroke:0;">5f2 schematics - Cerc...</span>
<span style="left:672px;top:903px;font-size:11px;color:#fff;-webkit-text-stroke:0;">Micro-Cap 9.0.6.1 - [...</span>
<span style="left:831px;top:903px;font-size:11px;color:#fff;-webkit-text-stroke:0;">raffaele</span>
<div style="left:980px;top:894px;width:110px;height:29px;background:#0f97ee;background:linear-gradient(to bottom,#1c9cf4 0px,#20a8f8 2px,#1898ef 12px,#128be6 26px,#1060c8 27px,#1d3fa5 28px)"></div>
<div style="left:979px;top:894px;width:1px;height:29px;background:#1a55b8;"></div>
<svg style="position:absolute;left:965px;top:896px" width="125" height="24">
<circle cx="15" cy="12" r="8.5" fill="#4aa8f4" stroke="#2a70c8"/><path d="M17,8 L13,12 L17,16" stroke="#fff" stroke-width="2.2" fill="none"/>
<rect x="26" y="6" width="9" height="8" fill="#40509a" stroke="#c8d0f0" stroke-width="0.8"/><rect x="31" y="3" width="9" height="8" fill="#40509a" stroke="#c8d0f0" stroke-width="0.8"/><rect x="25" y="15" width="10" height="3" fill="#d0d8f0"/>
<circle cx="49" cy="10" r="5" fill="#8a8070" stroke="#e0e0e0"/><circle cx="49" cy="10" r="2" fill="#505050"/>
<polygon points="66,4 72,4 77,9 77,15 72,20 66,20 61,15 61,9" fill="#0010c8"/><path d="M62,12 L65,12 L67,8 L69,15 L71,8 L73,14 L75,12 L77,12" stroke="#fff" stroke-width="1" fill="none"/>
</svg>
<span style="left:1050px;top:903px;font-size:10.5px;color:#fff;-webkit-text-stroke:0;">10.18</span>
</body></html>
